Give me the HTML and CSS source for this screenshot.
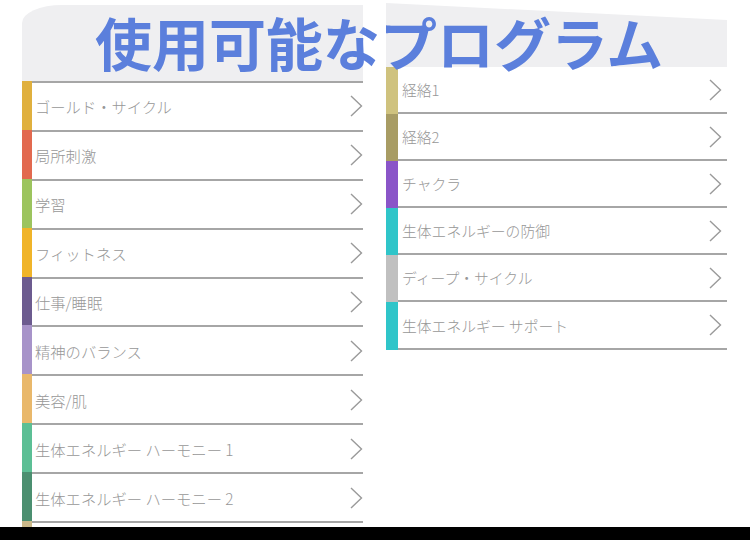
FILE: index.html
```html
<!DOCTYPE html>
<html lang="ja">
<head>
    <meta charset="UTF-8">
    <meta name="viewport" content="width=device-width, initial-scale=1.0">
    <title>使用可能なプログラム</title>
    <link rel="stylesheet" href="styles.css">
</head>
<body>
    <div class="screen">
        <h1 class="title">使用可能なプログラム</h1>

        <div class="panel panel-left">
            <div class="head"></div>
            <div class="list">
                <div class="row"><span class="strip c-gold"></span><div class="row-body"><span class="label">ゴールド・サイクル</span><svg class="chev" viewBox="0 0 13 22"><polyline points="1,1 11.5,11 1,21"/></svg></div></div>
                <div class="row"><span class="strip c-coral"></span><div class="row-body"><span class="label">局所刺激</span><svg class="chev" viewBox="0 0 13 22"><polyline points="1,1 11.5,11 1,21"/></svg></div></div>
                <div class="row"><span class="strip c-green"></span><div class="row-body"><span class="label">学習</span><svg class="chev" viewBox="0 0 13 22"><polyline points="1,1 11.5,11 1,21"/></svg></div></div>
                <div class="row"><span class="strip c-amber"></span><div class="row-body"><span class="label">フィットネス</span><svg class="chev" viewBox="0 0 13 22"><polyline points="1,1 11.5,11 1,21"/></svg></div></div>
                <div class="row"><span class="strip c-plum"></span><div class="row-body"><span class="label">仕事/睡眠</span><svg class="chev" viewBox="0 0 13 22"><polyline points="1,1 11.5,11 1,21"/></svg></div></div>
                <div class="row"><span class="strip c-lavender"></span><div class="row-body"><span class="label">精神のバランス</span><svg class="chev" viewBox="0 0 13 22"><polyline points="1,1 11.5,11 1,21"/></svg></div></div>
                <div class="row"><span class="strip c-peach"></span><div class="row-body"><span class="label">美容/肌</span><svg class="chev" viewBox="0 0 13 22"><polyline points="1,1 11.5,11 1,21"/></svg></div></div>
                <div class="row"><span class="strip c-mint"></span><div class="row-body"><span class="label">生体エネルギー ハーモニー 1</span><svg class="chev" viewBox="0 0 13 22"><polyline points="1,1 11.5,11 1,21"/></svg></div></div>
                <div class="row"><span class="strip c-forest"></span><div class="row-body"><span class="label">生体エネルギー ハーモニー 2</span><svg class="chev" viewBox="0 0 13 22"><polyline points="1,1 11.5,11 1,21"/></svg></div></div>
                <div class="row"><span class="strip c-sand"></span><div class="row-body"></div></div>
            </div>
        </div>

        <div class="panel panel-right">
            <div class="head"></div>
            <div class="list">
                <div class="row"><span class="strip c-khaki"></span><div class="row-body"><span class="label">経絡1</span><svg class="chev" viewBox="0 0 13 22"><polyline points="1,1 11.5,11 1,21"/></svg></div></div>
                <div class="row"><span class="strip c-olive"></span><div class="row-body"><span class="label">経絡2</span><svg class="chev" viewBox="0 0 13 22"><polyline points="1,1 11.5,11 1,21"/></svg></div></div>
                <div class="row"><span class="strip c-violet"></span><div class="row-body"><span class="label">チャクラ</span><svg class="chev" viewBox="0 0 13 22"><polyline points="1,1 11.5,11 1,21"/></svg></div></div>
                <div class="row"><span class="strip c-cyan"></span><div class="row-body"><span class="label">生体エネルギーの防御</span><svg class="chev" viewBox="0 0 13 22"><polyline points="1,1 11.5,11 1,21"/></svg></div></div>
                <div class="row"><span class="strip c-grey"></span><div class="row-body"><span class="label">ディープ・サイクル</span><svg class="chev" viewBox="0 0 13 22"><polyline points="1,1 11.5,11 1,21"/></svg></div></div>
                <div class="row"><span class="strip c-cyan"></span><div class="row-body"><span class="label">生体エネルギー サポート</span><svg class="chev" viewBox="0 0 13 22"><polyline points="1,1 11.5,11 1,21"/></svg></div></div>
            </div>
        </div>
    </div>
    <div class="bottom-bar"></div>
</body>
</html>
```

FILE: styles.css
```css
body {
    margin: 0;
    background: #fff;
    font-family: "Noto Sans CJK JP", "Noto Sans", sans-serif;
    overflow: hidden;
}
.screen {
    height: 527px;
    overflow: hidden;
    display: grid;
    grid-template-columns: 22px 341px 23px 341px 1fr;
    align-items: start;
}
.title {
    grid-column: 2 / 5;
    grid-row: 1;
    z-index: 1;
    margin: 13px 0 0 73px;
    font-size: 57px;
    font-weight: bold;
    line-height: 1;
    color: #5b7fdc;
    white-space: nowrap;
}
.panel {
    grid-row: 1;
    display: flex;
    flex-direction: column;
}
.panel-left {
    grid-column: 2;
}
.panel-right {
    grid-column: 4;
}
.head {
    background: #efeff1;
}
.panel-left .head {
    margin-top: 5px;
    height: 76px;
    border-top-left-radius: 40px 18px;
}
.panel-right .head {
    margin-top: 3px;
    height: 64px;
    clip-path: polygon(0 0, 100% 17px, 100% 100%, 0 100%);
}
.row {
    display: flex;
}
.strip {
    flex: none;
}
.row-body {
    flex: 1;
    display: flex;
    align-items: center;
    justify-content: space-between;
    box-sizing: border-box;
}
.label {
    color: #979797;
    font-weight: 300;
    white-space: nowrap;
}
.chev {
    width: 13px;
    height: 22px;
    fill: none;
    stroke: #9a9a9a;
    stroke-width: 1.4;
}

/* left list: line above each row */
.panel-left .row {
    height: 48.9px;
}
.panel-left .strip {
    width: 10px;
}
.panel-left .row-body {
    border-top: 2px solid #a6a6a6;
    padding-left: 3px;
}
.panel-left .label {
    font-size: 15.3px;
}

/* right list: line below each row */
.panel-right .row {
    height: 47.1px;
}
.panel-right .strip {
    width: 12px;
}
.panel-right .row-body {
    border-bottom: 2px solid #a6a6a6;
    padding: 0 5px 0 4px;
}
.panel-right .label {
    font-size: 14.8px;
}

.c-gold { background: #e0b03e; }
.c-coral { background: #e2694f; }
.c-green { background: #9cc45e; }
.c-amber { background: #f0b429; }
.c-plum { background: #6c5b8f; }
.c-lavender { background: #a793c9; }
.c-peach { background: #e9b86b; }
.c-mint { background: #5cbf95; }
.c-forest { background: #4b8f70; }
.c-sand { background: #cbb98a; }
.c-khaki { background: #cfc27e; }
.c-olive { background: #a89c64; }
.c-violet { background: #8a55c8; }
.c-cyan { background: #2fc5c9; }
.c-grey { background: #c0c0c0; }

.bottom-bar {
    height: 13px;
    background: #000;
}
```
